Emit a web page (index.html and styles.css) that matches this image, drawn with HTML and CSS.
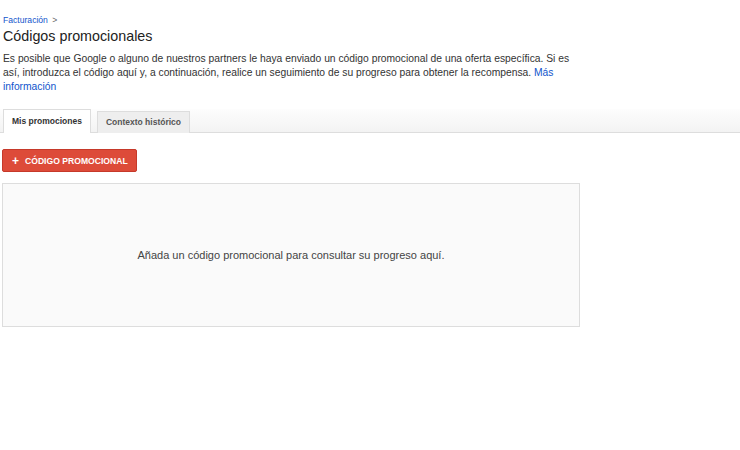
FILE: index.html
```html
<!DOCTYPE html>
<html lang="es">
<head>
    <meta charset="UTF-8">
    <title>Códigos promocionales</title>
    <link rel="stylesheet" href="styles.css">
</head>
<body>
    <div class="page">
        <div class="header">
            <a class="crumb" href="#">Facturación</a> <span class="crumb-sep">&gt;</span>
            <h1>Códigos promocionales</h1>
            <p class="intro">Es posible que Google o alguno de nuestros partners le haya enviado un código promocional de una oferta específica. Si es así, introduzca el código aquí y, a continuación, realice un seguimiento de su progreso para obtener la recompensa. <a href="#">Más información</a></p>
        </div>

        <div class="tabs">
            <div class="tab active">Mis promociones</div>
            <div class="tab">Contexto histórico</div>
        </div>

        <div class="content">
            <button class="btn-red"><span class="plus">+</span>CÓDIGO PROMOCIONAL</button>
            <div class="empty">Añada un código promocional para consultar su progreso aquí.</div>
        </div>
    </div>
</body>
</html>
```

FILE: styles.css
```css
body {
    margin: 0;
    background: #fff;
    font-family: "Liberation Sans", Arial, sans-serif;
    color: #333;
}
a {
    color: #15c;
    text-decoration: none;
}
.header {
    padding: 12px 0 0 3px;
    width: 575px;
    line-height: 12px;
}
.crumb {
    font-size: 8.6px;
}
.crumb-sep {
    font-size: 8.6px;
    color: #666;
}
h1 {
    margin: 1px 0 0;
    font-size: 14.3px;
    font-weight: normal;
    color: #222;
    line-height: 18px;
}
.intro {
    margin: 7px 0 0;
    font-size: 10.3px;
    line-height: 14px;
    color: #333;
}
.tabs {
    display: flex;
    gap: 6px;
    margin-top: 15px;
    padding-left: 3px;
    height: 23px;
    align-items: flex-end;
    background: linear-gradient(#fdfdfd, #f3f3f3);
    border-bottom: 1px solid #ddd;
}
.tab {
    height: 21px;
    line-height: 21px;
    padding: 0 8px;
    font-size: 8.5px;
    font-weight: bold;
    color: #555;
    background: #eee;
    border: 1px solid #ddd;
    border-bottom: none;
    margin-bottom: -1px;
}
.tab.active {
    background: #fff;
    color: #333;
    height: 23px;
    line-height: 23px;
}
.content {
    padding: 16px 0 0 2px;
}
.btn-red {
    display: flex;
    align-items: center;
    height: 23px;
    padding: 0 8px 0 9px;
    border: 1px solid #c6392a;
    border-radius: 2px;
    background: #dd4b39;
    color: #fff;
    font-family: "Liberation Sans", Arial, sans-serif;
    font-size: 8.6px;
    font-weight: bold;
}
.plus {
    font-size: 12px;
    font-weight: bold;
    margin-right: 6px;
}
.empty {
    margin-top: 11px;
    width: 576px;
    height: 142px;
    display: flex;
    align-items: center;
    justify-content: center;
    background: #fafafa;
    border: 1px solid #ddd;
    font-size: 11px;
    color: #444;
}
```
